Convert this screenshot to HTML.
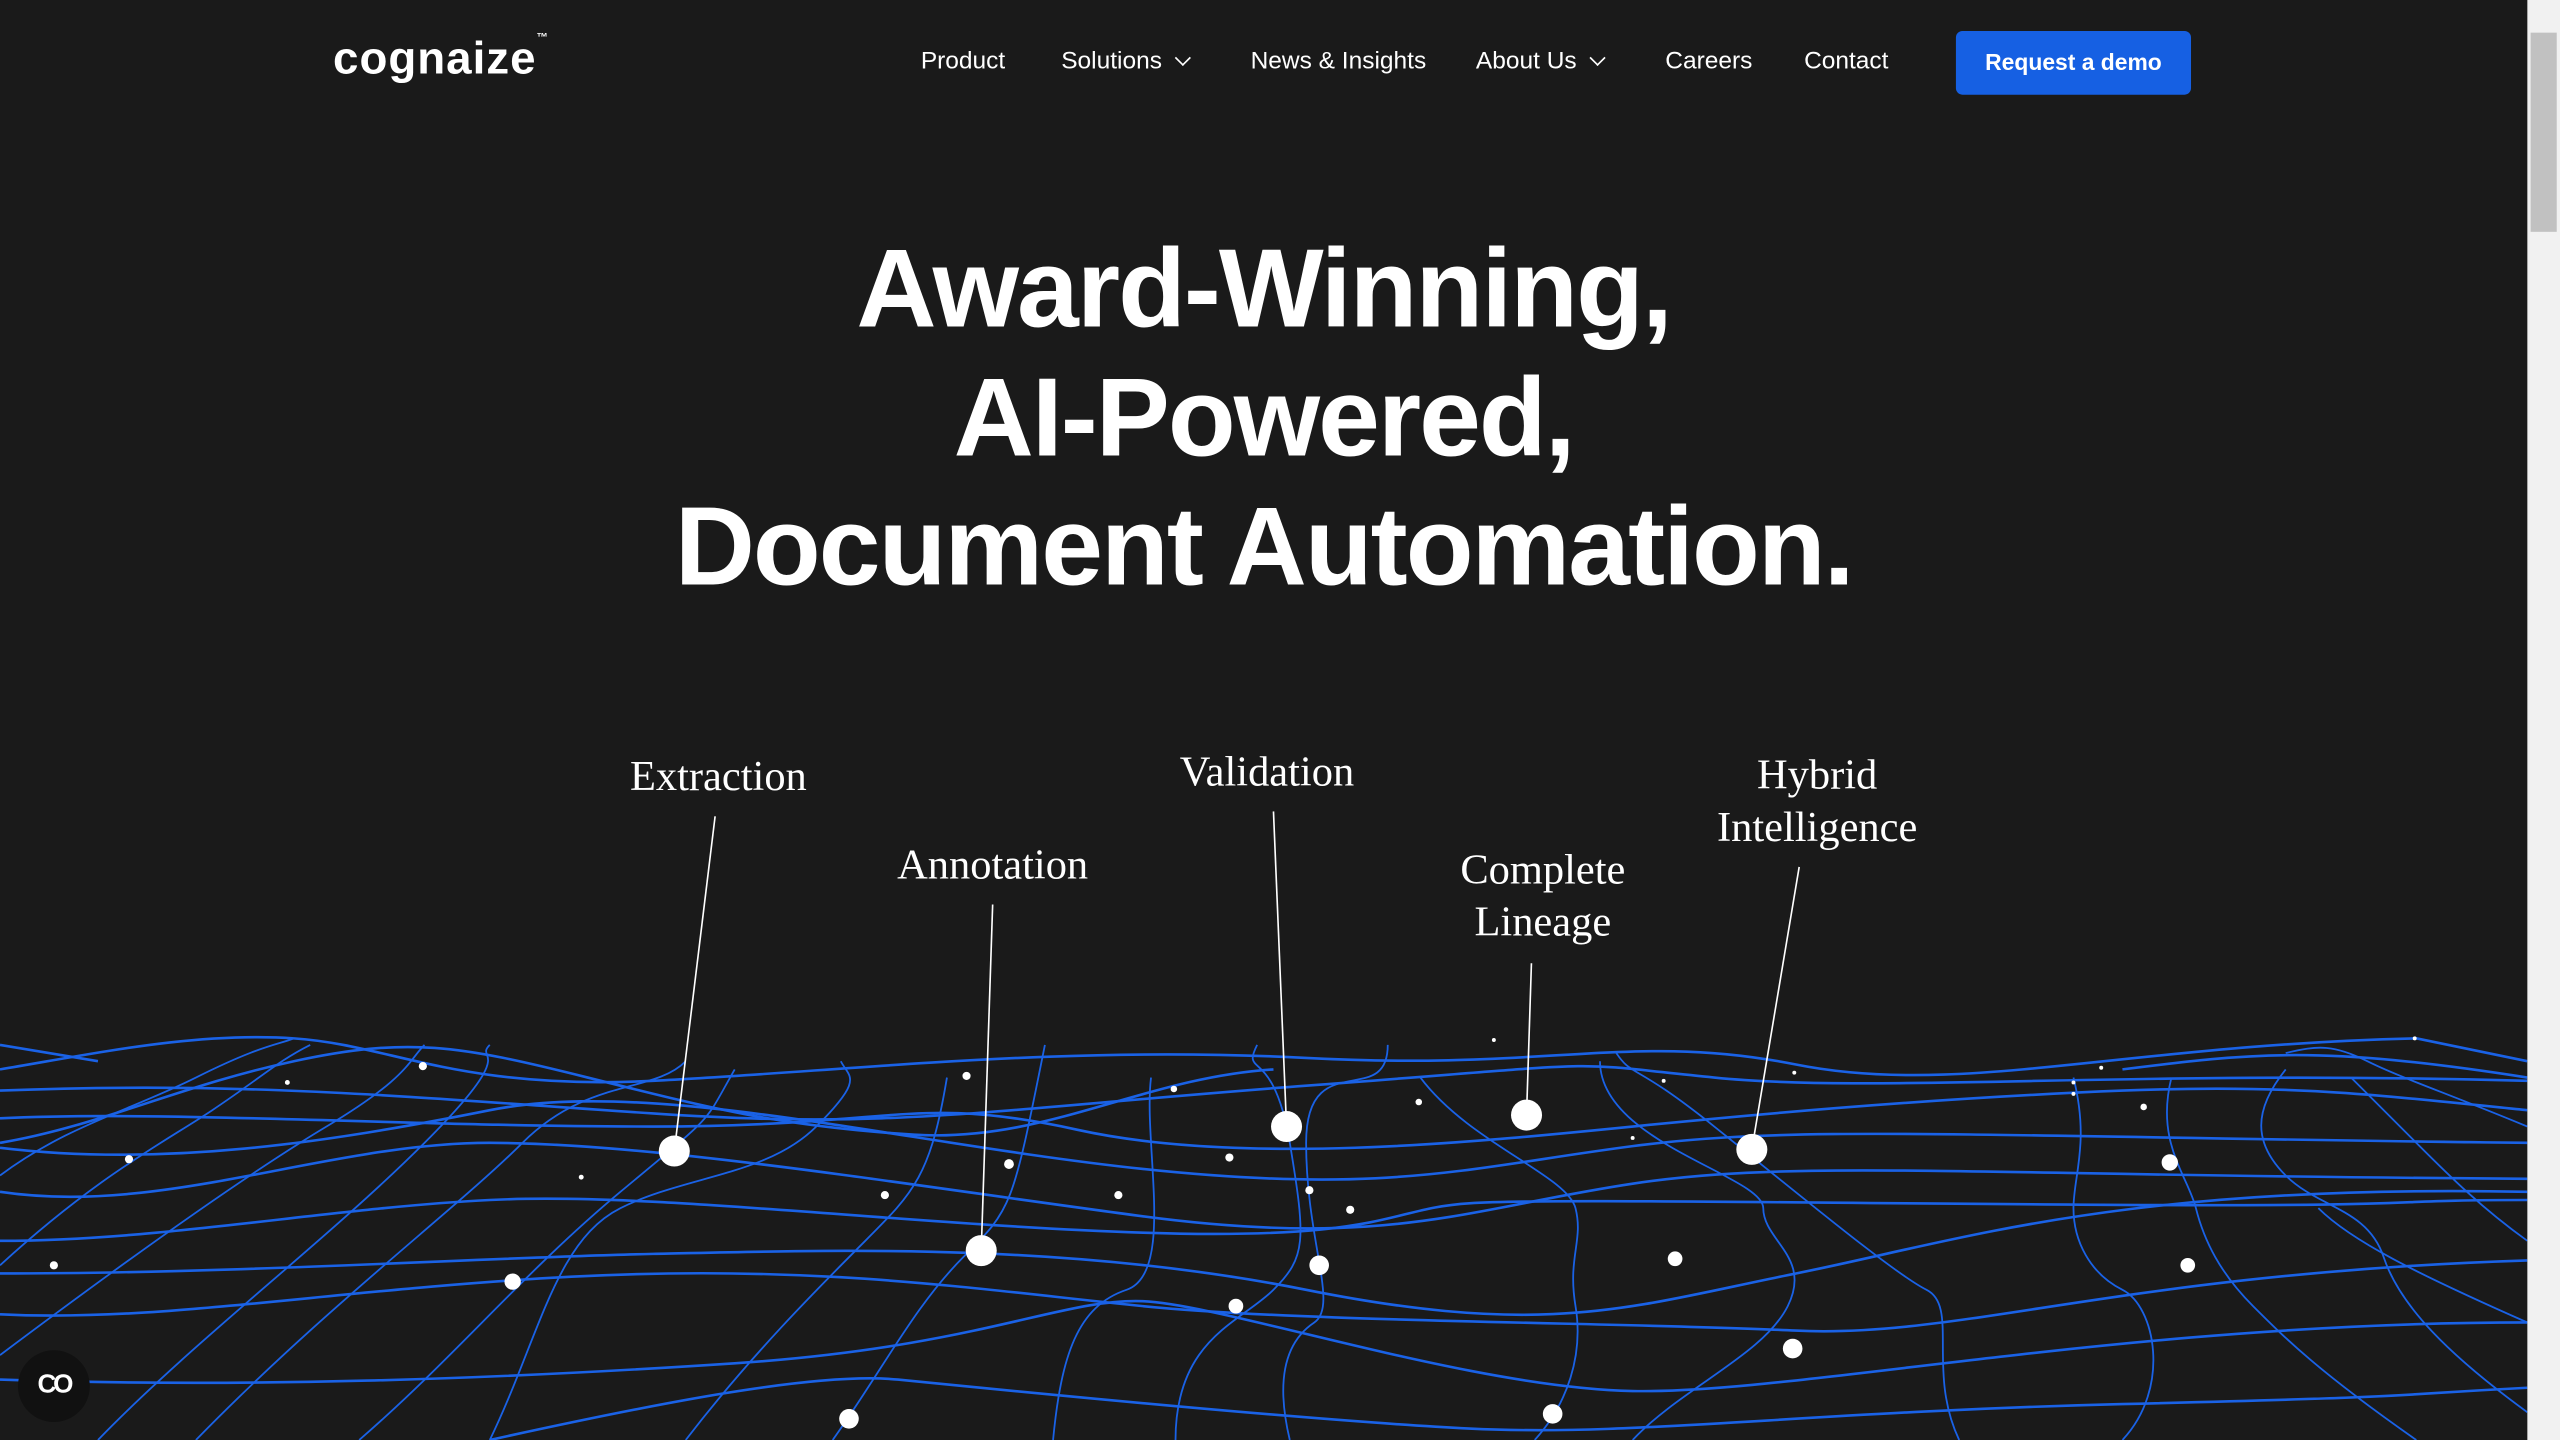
<!DOCTYPE html>
<html><head><meta charset="utf-8"><style>
html,body{margin:0;padding:0;background:#1a1a1a;overflow:hidden;width:2560px;height:1440px}
#w{position:absolute;left:0;top:0;width:1568px;height:882px;transform:scale(1.632653);transform-origin:0 0;background:#1a1a1a;font-family:"Liberation Sans",sans-serif;color:#fff}
.nav{position:absolute;top:29px;font-size:15px;color:#fff}
.logo{position:absolute;left:204px;top:20px;font-size:28px;font-weight:bold;letter-spacing:0.6px}
.btn{position:absolute;left:1198px;top:19px;width:144px;height:39px;background:#1660e3;border-radius:4px;font-size:14px;font-weight:bold;text-align:center;line-height:39px}
h1{position:absolute;left:0;width:1548px;top:138px;margin:0;text-align:center;font-size:68px;line-height:79px;font-weight:bold;letter-spacing:-1.2px}
.lab{position:absolute;font-family:"Liberation Serif",serif;font-size:26px;line-height:32px;text-align:center;transform:translateX(-50%);white-space:nowrap}
.sb{position:absolute;left:1548px;top:0;width:20px;height:882px;background:#f1f1f1}
.th{position:absolute;left:1550px;top:20px;width:16px;height:122px;background:#c1c1c1}
.chev{display:inline-block;width:6px;height:6px;border-right:1.5px solid #fff;border-bottom:1.5px solid #fff;transform:rotate(45deg);margin-left:9px;position:relative;top:-3px}
</style></head><body><div id="w">
<div class="logo">cognaize<span style="font-size:7px;vertical-align:top">™</span></div>
<div class="nav" style="left:564px">Product</div>
<div class="nav" style="left:650px">Solutions<span class="chev"></span></div>
<div class="nav" style="left:766px">News &amp; Insights</div>
<div class="nav" style="left:904px">About Us<span class="chev"></span></div>
<div class="nav" style="left:1020px">Careers</div>
<div class="nav" style="left:1105px">Contact</div>
<div class="btn">Request a demo</div>
<h1>Award-Winning,<br>AI-Powered,<br>Document Automation.</h1>
<svg style="position:absolute;left:0;top:0" width="1548" height="882" viewBox="0 0 1548 882">
<g fill="none" stroke="#1a62e6" stroke-width="1.6">
<path d="M0,655 C60,645 120,632 180,636 S280,668 400,662 S650,640 800,648 S1000,632 1100,652 S1300,640 1480,636 L1548,650"/>
<path d="M0,668 C150,662 250,672 400,682 S600,680 800,665 S950,650 1050,660 S1300,655 1548,662"/>
<path d="M0,685 C100,680 250,690 400,690 S560,670 660,692 S900,700 1000,690 S1200,672 1300,668 S1450,670 1548,680"/>
<path d="M0,703 C100,715 200,700 300,680 S550,700 700,716 S900,715 1000,702 S1200,696 1548,700"/>
<path d="M0,730 C100,745 200,700 300,700 S550,725 700,745 S900,740 1000,725 S1200,720 1548,722"/>
<path d="M0,760 C100,760 200,740 300,735 S550,750 700,755 S850,740 900,737 S1100,737 1300,738 S1450,735 1548,735"/>
<path d="M0,780 C150,780 300,770 400,768 S650,760 800,790 S1000,800 1100,780 S1300,725 1548,730"/>
<path d="M0,805 C100,810 200,790 350,782 S600,790 700,800 S1000,810 1100,815 S1300,780 1548,772"/>
<path d="M0,845 C150,850 300,845 450,835 S650,795 700,797 S900,850 1000,852 S1300,810 1548,810"/>
<path d="M300,882 C400,860 500,840 550,845 S800,870 900,875 S1100,865 1300,860 S1450,855 1548,850"/>
<path d="M0,700 C60,690 110,665 180,650 S280,640 360,660 S480,690 560,695 S700,660 780,655"/>
<path d="M0,640 L60,650 M1300,655 C1380,645 1420,640 1548,660"/>
</g>
<g fill="none" stroke="#1a62e6" stroke-width="1.1">
<path d="M0,720 C40,690 80,680 120,660 S170,640 180,636"/>
<path d="M0,775 C60,720 100,700 130,680 S170,650 190,640"/>
<path d="M0,830 C80,770 150,720 200,690 S250,650 260,640"/>
<path d="M60,882 C120,820 200,760 260,700 S290,650 300,640"/>
<path d="M120,882 C200,800 280,740 320,700 S400,670 420,650"/>
<path d="M220,882 C280,830 320,780 380,730 S430,690 450,655"/>
<path d="M300,882 C330,820 340,760 380,740 S470,720 500,690 S520,660 515,650"/>
<path d="M420,882 C460,830 500,790 530,760 S570,720 580,660"/>
<path d="M510,882 C540,840 560,800 590,770 S620,740 640,640"/>
<path d="M645,882 C650,830 660,800 690,790 S700,700 705,660"/>
<path d="M720,882 C720,820 760,810 780,790 S800,760 790,700 S760,660 770,640"/>
<path d="M790,882 C780,840 790,820 805,810 S800,760 800,700 S850,680 850,640"/>
<path d="M940,882 C960,860 970,830 965,800 S970,760 965,740 S900,700 870,660"/>
<path d="M1000,882 C1030,850 1080,830 1095,800 S1080,760 1080,740 S980,700 980,650"/>
<path d="M1200,882 C1180,840 1200,800 1180,790 S1100,730 1050,690 S1000,660 990,645"/>
<path d="M1300,882 C1330,850 1320,800 1300,790 S1270,760 1270,740 S1280,700 1270,660"/>
<path d="M1480,882 C1420,840 1400,820 1380,800 S1350,760 1345,740 S1320,700 1330,660"/>
<path d="M1548,865 C1500,830 1470,800 1460,770 S1420,740 1400,720 S1380,680 1400,655"/>
<path d="M1548,760 C1520,740 1500,720 1480,700 S1450,670 1440,660"/>
<path d="M1548,690 C1500,670 1470,660 1450,650 S1420,640 1400,645"/>
<path d="M1548,810 C1480,780 1440,760 1420,740"/>
</g>
<g stroke="#fff" stroke-width="1">
<line x1="438" y1="500" x2="413" y2="705"/><line x1="608" y1="554" x2="601" y2="766"/>
<line x1="780" y1="497" x2="788" y2="690"/><line x1="938" y1="590" x2="935" y2="683"/>
<line x1="1102" y1="531" x2="1073" y2="704"/>
</g>
<g fill="#fff">
<circle cx="413" cy="705" r="9.5"/><circle cx="601" cy="766" r="9.5"/><circle cx="788" cy="690" r="9.5"/><circle cx="935" cy="683" r="9.5"/><circle cx="1073" cy="704" r="9.5"/>
<circle cx="314" cy="785" r="5"/><circle cx="520" cy="869" r="6"/><circle cx="808" cy="775" r="6"/><circle cx="757" cy="800" r="4.5"/><circle cx="951" cy="866" r="6"/><circle cx="1026" cy="771" r="4.5"/><circle cx="1098" cy="826" r="6"/><circle cx="1329" cy="712" r="5"/><circle cx="1340" cy="775" r="4.5"/>
<circle cx="259" cy="653" r="2.5"/><circle cx="176" cy="663" r="1.5"/><circle cx="79" cy="710" r="2.5"/><circle cx="356" cy="721" r="1.5"/><circle cx="33" cy="775" r="2.5"/><circle cx="592" cy="659" r="2.5"/><circle cx="618" cy="713" r="3"/><circle cx="542" cy="732" r="2.5"/><circle cx="685" cy="732" r="2.5"/><circle cx="719" cy="667" r="2"/><circle cx="753" cy="709" r="2.5"/><circle cx="802" cy="729" r="2.5"/><circle cx="827" cy="741" r="2.5"/><circle cx="869" cy="675" r="2"/><circle cx="915" cy="637" r="1.2"/><circle cx="1000" cy="697" r="1.2"/><circle cx="1019" cy="662" r="1.2"/><circle cx="1099" cy="657" r="1.2"/><circle cx="1270" cy="663" r="1.2"/><circle cx="1287" cy="654" r="1.2"/><circle cx="1313" cy="678" r="2"/><circle cx="1479" cy="636" r="1.2"/><circle cx="1270" cy="670" r="1.2"/>
</g>
</svg>
<div class="lab" style="left:440px;top:460px">Extraction</div>
<div class="lab" style="left:608px;top:514px">Annotation</div>
<div class="lab" style="left:776px;top:457px">Validation</div>
<div class="lab" style="left:945px;top:517px">Complete<br>Lineage</div>
<div class="lab" style="left:1113px;top:459px">Hybrid<br>Intelligence</div>
<div style="position:absolute;left:11px;top:827px;width:44px;height:44px;border-radius:50%;background:#111;color:#fff;font-size:16px;font-weight:bold;line-height:44px;text-align:center;letter-spacing:-2px">CO</div>
<div class="sb"></div><div class="th"></div>
</div></body></html>
